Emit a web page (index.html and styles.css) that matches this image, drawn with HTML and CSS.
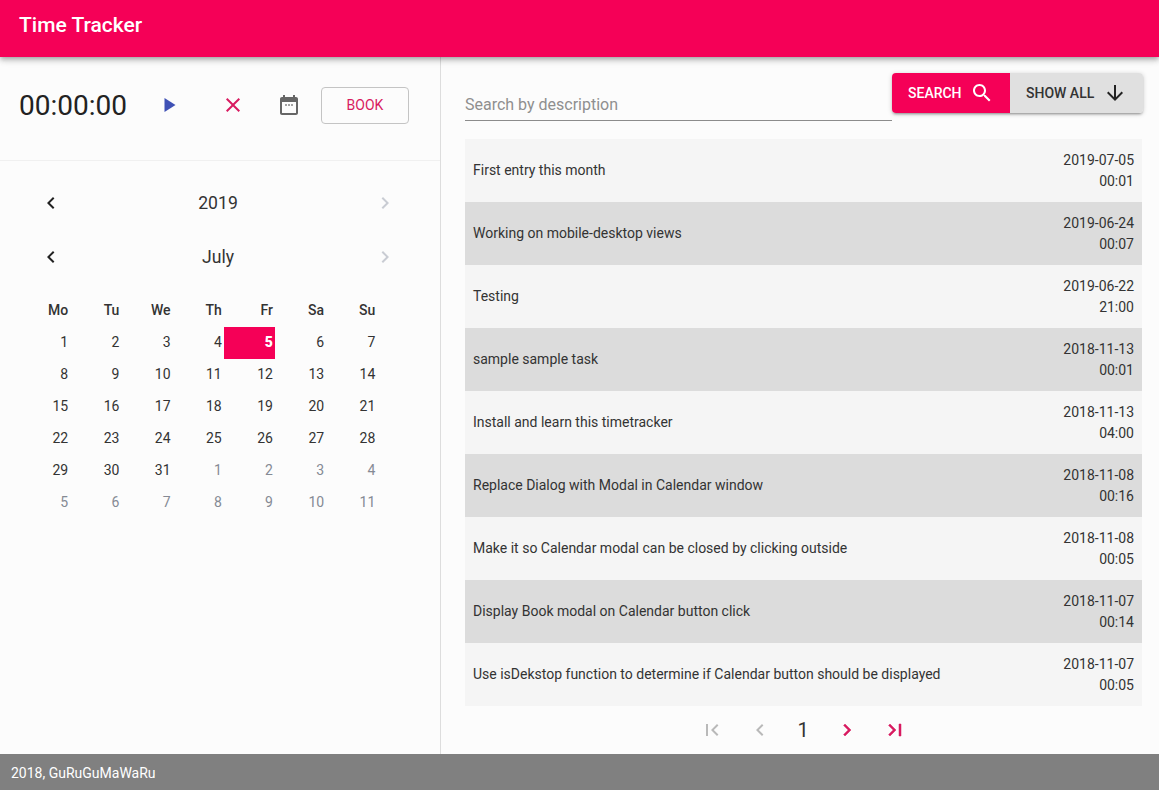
FILE: index.html
```html
<!DOCTYPE html>
<html lang="en">
<head>
    <meta charset="UTF-8">
    <meta name="viewport" content="width=device-width, initial-scale=1.0">
    <title>Time Tracker</title>
    <link rel="stylesheet" href="styles.css">
</head>
<body>
    <header class="app-bar">Time Tracker</header>
    <div class="content">
        <aside class="sidebar">
            <div class="timer">
                <span class="timer-time">00:00:00</span>
                <button class="icon-btn play"><svg width="24" height="24" viewBox="0 0 24 24"><path d="M6.500 5v14l11-7z" fill="#3f51b5"/></svg></button>
                <button class="icon-btn cancel"><svg width="24" height="24" viewBox="0 0 24 24"><path d="M19 6.410L17.590 5 12 10.590 6.410 5 5 6.410 10.590 12 5 17.590 6.410 19 12 13.410 17.590 19 19 17.590 13.410 12z" fill="#d81b60"/></svg></button>
                <button class="icon-btn cal"><svg width="24" height="24" viewBox="0 0 24 24"><path d="M9.800 11.200H8.200v1.600h1.600v-1.600zm3 0h-1.600v1.600h1.600v-1.600zm3 0h-1.600v1.600h1.600v-1.600zM19 4h-1V2h-2v2H8V2H6v2H5c-1.110 0-2 .9-2 2v14c0 1.100.89 2 2 2h14c1.100 0 2-.9 2-2V6c0-1.100-.9-2-2-2zm0 16H5V9h14v11z" fill="#666"/></svg></button>
                <button class="book-btn">BOOK</button>
            </div>
            <div class="calendar">
                <div class="cal-nav">
                    <svg class="chev" width="24" height="24" viewBox="0 0 24 24"><path d="M15.410 7.410L14 6l-6 6 6 6 1.410-1.410L10.830 12z" fill="#222"/></svg>
                    <span>2019</span>
                    <svg class="chev" width="24" height="24" viewBox="0 0 24 24"><path d="M10 6L8.590 7.410 13.170 12l-4.580 4.590L10 18l6-6z" fill="#c9ccd3"/></svg>
                </div>
                <div class="cal-nav">
                    <svg class="chev" width="24" height="24" viewBox="0 0 24 24"><path d="M15.410 7.410L14 6l-6 6 6 6 1.410-1.410L10.830 12z" fill="#222"/></svg>
                    <span>July</span>
                    <svg class="chev" width="24" height="24" viewBox="0 0 24 24"><path d="M10 6L8.590 7.410 13.170 12l-4.580 4.590L10 18l6-6z" fill="#c9ccd3"/></svg>
                </div>
                <div class="cal-grid">
                    <div class="wd">Mo</div><div class="wd">Tu</div><div class="wd">We</div><div class="wd">Th</div><div class="wd">Fr</div><div class="wd">Sa</div><div class="wd">Su</div>
                    <div>1</div><div>2</div><div>3</div><div>4</div><div class="sel">5</div><div>6</div><div>7</div>
                    <div>8</div><div>9</div><div>10</div><div>11</div><div>12</div><div>13</div><div>14</div>
                    <div>15</div><div>16</div><div>17</div><div>18</div><div>19</div><div>20</div><div>21</div>
                    <div>22</div><div>23</div><div>24</div><div>25</div><div>26</div><div>27</div><div>28</div>
                    <div>29</div><div>30</div><div>31</div><div class="off">1</div><div class="off">2</div><div class="off">3</div><div class="off">4</div>
                    <div class="off">5</div><div class="off">6</div><div class="off">7</div><div class="off">8</div><div class="off">9</div><div class="off">10</div><div class="off">11</div>
                </div>
            </div>
        </aside>
        <main class="main">
            <div class="search-row">
                <input class="search-input" type="text" placeholder="Search by description">
                <div class="search-btns">
                    <button class="btn btn-search">SEARCH <svg width="24" height="24" viewBox="0 0 24 24"><path d="M15.500 14h-.79l-.28-.27C15.410 12.590 16 11.110 16 9.500 16 5.910 13.090 3 9.500 3S3 5.910 3 9.500 5.910 16 9.500 16c1.610 0 3.090-.59 4.230-1.570l.27.280v.79l5 4.990L20.490 19l-4.990-5zm-6 0C7.010 14 5 11.990 5 9.500S7.010 5 9.500 5 14 7.010 14 9.500 11.990 14 9.500 14z" fill="#fff"/></svg></button>
                    <button class="btn btn-all">SHOW ALL <svg width="24" height="24" viewBox="0 0 24 24"><path d="M20 12l-1.410-1.410L13 16.170V4h-2v12.170l-5.580-5.590L4 12l8 8 8-8z" fill="#222"/></svg></button>
                </div>
            </div>
            <ul class="entries">
                <li><span>First entry this month</span><time>2019-07-05<br>00:01</time></li>
                <li><span>Working on mobile-desktop views</span><time>2019-06-24<br>00:07</time></li>
                <li><span>Testing</span><time>2019-06-22<br>21:00</time></li>
                <li><span>sample sample task</span><time>2018-11-13<br>00:01</time></li>
                <li><span>Install and learn this timetracker</span><time>2018-11-13<br>04:00</time></li>
                <li><span>Replace Dialog with Modal in Calendar window</span><time>2018-11-08<br>00:16</time></li>
                <li><span>Make it so Calendar modal can be closed by clicking outside</span><time>2018-11-08<br>00:05</time></li>
                <li><span>Display Book modal on Calendar button click</span><time>2018-11-07<br>00:14</time></li>
                <li><span>Use isDekstop function to determine if Calendar button should be displayed</span><time>2018-11-07<br>00:05</time></li>
            </ul>
            <div class="pager">
                <svg class="pg-first" width="24" height="24" viewBox="0 0 24 24"><path d="M18.410 16.590L13.820 12l4.590-4.590L17 6l-6 6 6 6zM6 6h2v12H6z" fill="#b9b9b9"/></svg>
                <svg class="pg-prev" width="24" height="24" viewBox="0 0 24 24"><path d="M15.410 7.410L14 6l-6 6 6 6 1.410-1.410L10.830 12z" fill="#b9b9b9"/></svg>
                <span class="pg-num">1</span>
                <svg class="pg-next" width="24" height="24" viewBox="0 0 24 24"><path d="M10 6L8.590 7.410 13.170 12l-4.580 4.590L10 18l6-6z" fill="#d81b60"/></svg>
                <svg class="pg-last" width="24" height="24" viewBox="0 0 24 24"><path d="M5.590 7.410L10.180 12l-4.590 4.590L7 18l6-6-6-6zM16 6h2v12h-2z" fill="#d81b60"/></svg>
            </div>
        </main>
    </div>
    <footer class="footer">2018, GuRuGuMaWaRu</footer>
</body>
</html>
```

FILE: styles.css
```css
* {
    box-sizing: border-box;
}
body {
    margin: 0;
    height: 100vh;
    display: flex;
    flex-direction: column;
    overflow: hidden;
    font-family: Roboto, Arial, sans-serif;
    background-color: #fcfcfc;
    color: #333;
}
button {
    font-family: inherit;
    cursor: pointer;
}
.app-bar {
    height: 57px;
    flex: none;
    padding: 0 19px;
    line-height: 50px;
    font-size: 21px;
    font-weight: 500;
    color: #fff;
    background-color: #f50057;
    box-shadow: 0 2px 4px -1px rgba(0,0,0,.2), 0 4px 5px 0 rgba(0,0,0,.14), 0 1px 10px 0 rgba(0,0,0,.12);
    position: relative;
}
.content {
    flex: 1;
    display: flex;
    min-height: 0;
}
.sidebar {
    width: 441px;
    flex: none;
    border-right: 1px solid #ddd;
}
.timer {
    height: 104px;
    display: flex;
    align-items: center;
    padding: 0 0 7px 19px;
    border-bottom: 1px solid #f0f0f0;
}
.timer-time {
    width: 139px;
    font-size: 28px;
    color: #222;
}
.icon-btn {
    width: 24px;
    height: 24px;
    padding: 0;
    border: none;
    background: none;
}
.cancel {
    margin-left: 39px;
}
.cal {
    margin-left: 32px;
}
.book-btn {
    width: 88px;
    height: 37px;
    margin-left: 20px;
    font-size: 14px;
    color: #d81b60;
    background: none;
    border: 1px solid #c4c4c4;
    border-radius: 4px;
}
.calendar {
    padding: 15px 43px 0 19px;
}
.cal-nav {
    height: 54px;
    display: flex;
    align-items: center;
    justify-content: space-between;
    padding-left: 20px;
    font-size: 17.6px;
    color: #333;
}
.cal-grid {
    display: grid;
    grid-template-columns: repeat(7, 51.2px);
    grid-auto-rows: 32px;
    margin-top: 11px;
    font-size: 14px;
}
.cal-grid div {
    display: flex;
    align-items: center;
    justify-content: flex-end;
    padding: 0 2px 2px 0;
}
.cal-grid .wd {
    font-weight: 500;
}
.cal-grid .off {
    color: #858a94;
}
.cal-grid .sel {
    color: #fff;
    font-weight: 900;
    background-color: #f50057;
}
.main {
    flex: 1;
    min-width: 0;
    padding: 16px 16px 0 24px;
}
.search-row {
    display: flex;
    height: 66px;
    align-items: flex-start;
}
.search-input {
    flex: 1;
    height: 32px;
    margin-top: 16px;
    padding: 0;
    border: none;
    border-bottom: 1px solid #8c8c8c;
    background: none;
    outline: none;
    font-family: inherit;
    font-size: 16px;
}
.search-input::placeholder {
    color: #8f8f8f;
    opacity: 1;
}
.search-btns {
    display: flex;
    height: 40px;
    border-radius: 4px;
    box-shadow: 0 1px 5px 0 rgba(0,0,0,.2), 0 2px 2px 0 rgba(0,0,0,.14), 0 3px 1px -2px rgba(0,0,0,.12);
}
.btn {
    display: flex;
    align-items: center;
    height: 40px;
    padding: 0 15px 0 16px;
    gap: 8px;
    border: none;
    font-size: 14px;
    font-weight: 500;
    white-space: nowrap;
}
.btn svg {
    flex: none;
}
.btn-search {
    width: 118px;
    color: #fff;
    background-color: #f50057;
    border-radius: 4px 0 0 4px;
}
.btn-all {
    width: 133px;
    gap: 9px;
    color: #333;
    background-color: #e0e0e0;
    border-radius: 0 4px 4px 0;
}
.entries {
    list-style: none;
    margin: 0;
    padding: 0;
    width: 677px;
}
.entries li {
    height: 63px;
    display: flex;
    align-items: center;
    justify-content: space-between;
    padding: 0 8px;
    font-size: 14px;
    line-height: 21px;
    background-color: #f5f5f5;
}
.entries li:nth-child(even) {
    background-color: #dcdcdc;
}
.entries time {
    text-align: right;
}
.pager {
    height: 48px;
    display: flex;
    align-items: center;
    padding-left: 235px;
}
.pg-prev {
    margin-left: 24px;
}
.pg-num {
    width: 22px;
    margin-left: 20px;
    text-align: center;
    font-size: 20px;
}
.pg-next {
    margin-left: 21px;
}
.pg-next path, .pg-last path {
    stroke: #d81b60;
    stroke-width: .5;
}
.pg-last {
    margin-left: 24px;
}
.footer {
    height: 36px;
    flex: none;
    padding: 0 11px;
    line-height: 38px;
    font-size: 14px;
    color: #fff;
    background-color: #808080;
}
```
